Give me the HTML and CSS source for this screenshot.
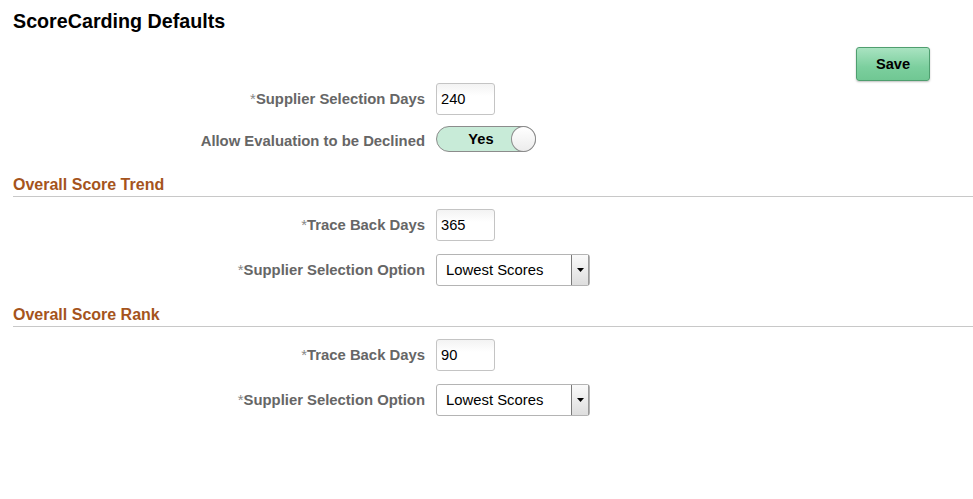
FILE: index.html
```html
<!DOCTYPE html>
<html>
<head>
<meta charset="utf-8">
<link rel="stylesheet" href="styles.css">
</head>
<body>
<div class="page">
  <h1 class="title">ScoreCarding Defaults</h1>
  <div class="toolbar">
    <button class="save-btn" type="button">Save</button>
  </div>

  <div class="form-row row-first">
    <label class="label"><span class="req">*</span>Supplier Selection Days</label>
    <input class="text-input" type="text" value="240">
  </div>
  <div class="form-row row-toggle">
    <label class="label label-toggle">Allow Evaluation to be Declined</label>
    <div class="toggle">
      <span class="toggle-text">Yes</span>
      <span class="toggle-knob"></span>
    </div>
  </div>

  <h2 class="section-head section-first">Overall Score Trend</h2>
  <div class="form-row row-after-head">
    <label class="label"><span class="req">*</span>Trace Back Days</label>
    <input class="text-input" type="text" value="365">
  </div>
  <div class="form-row row-select">
    <label class="label"><span class="req">*</span>Supplier Selection Option</label>
    <div class="select">
      <span class="select-text">Lowest Scores</span>
      <span class="select-btn"><svg width="7" height="4" viewBox="0 0 7 4"><path d="M0 0H7L3.5 4Z" fill="#000"/></svg></span>
    </div>
  </div>

  <h2 class="section-head section-second">Overall Score Rank</h2>
  <div class="form-row row-after-head">
    <label class="label"><span class="req">*</span>Trace Back Days</label>
    <input class="text-input" type="text" value="90">
  </div>
  <div class="form-row row-select">
    <label class="label"><span class="req">*</span>Supplier Selection Option</label>
    <div class="select">
      <span class="select-text">Lowest Scores</span>
      <span class="select-btn"><svg width="7" height="4" viewBox="0 0 7 4"><path d="M0 0H7L3.5 4Z" fill="#000"/></svg></span>
    </div>
  </div>
</div>
</body>
</html>
```

FILE: styles.css
```css
* { box-sizing: border-box; }
html, body { margin: 0; padding: 0; background: #fff; }
body {
  font-family: "Liberation Sans", Arial, sans-serif;
  font-size: 14.67px;
  color: #000;
}
.page {
  padding: 10px 0 0 13px;
  width: 973px;
}
.title {
  margin: 0;
  font-size: 19.7px;
  line-height: 23px;
  font-weight: bold;
  color: #000;
}
.toolbar {
  display: flex;
  justify-content: flex-end;
  padding: 14px 43px 0 0;
}
.save-btn {
  width: 74px;
  height: 34px;
  margin: 0;
  padding: 0;
  border: 1px solid #4f9e6f;
  border-radius: 3px;
  background: linear-gradient(#a9e3c1, #7ccf9e 60%, #70c793);
  box-shadow: 0 1px 2px rgba(0,0,0,0.25);
  font-family: "Liberation Sans", Arial, sans-serif;
  font-size: 14.67px;
  font-weight: bold;
  color: #000;
}
.form-row {
  display: flex;
  align-items: center;
  gap: 11px;
}
.row-first { margin-top: 2px; height: 32px; }
.row-toggle { margin-top: 11px; height: 26px; }
.row-after-head { margin-top: 12px; height: 32px; }
.row-select { margin-top: 13px; height: 32px; }
.label {
  width: 412px;
  text-align: right;
  font-size: 14.85px;
  font-weight: bold;
  color: #666;
  white-space: nowrap;
}
.label-toggle { padding-top: 3px; }
.req {
  font-weight: normal;
  color: #888;
}
.text-input {
  width: 59px;
  height: 32px;
  margin: 0;
  padding: 0 0 0 4px;
  border: 1px solid #c4c4c4;
  border-radius: 3px;
  background: linear-gradient(#f3f3f3, #fff 40%);
  font-family: "Liberation Sans", Arial, sans-serif;
  font-size: 14.67px;
  color: #000;
  outline: none;
}
.toggle {
  display: flex;
  align-items: center;
  width: 100px;
  height: 26px;
  border: 1px solid #8c8c8c;
  border-radius: 13px;
  background: #c8ebd8;
}
.toggle-text {
  flex: 1;
  text-align: center;
  padding-left: 14px;
  font-weight: bold;
  color: #000;
}
.toggle-knob {
  width: 25px;
  height: 26px;
  margin: -1px -1px -1px 0;
  border: 1px solid #8c8c8c;
  border-radius: 50%;
  background: linear-gradient(#fff, #ececec);
}
.section-head {
  margin: 0;
  padding-bottom: 2px;
  height: 22px;
  font-size: 16px;
  line-height: 19px;
  font-weight: bold;
  color: #a5541c;
  border-bottom: 1px solid #c8c8c8;
}
.section-first { margin-top: 23px; }
.section-second { margin-top: 19px; }
.select {
  display: flex;
  align-items: stretch;
  width: 154px;
  height: 32px;
  border: 1px solid #b4b4b4;
  border-radius: 3px;
  background: #fff;
}
.select-text {
  flex: 1;
  display: flex;
  align-items: center;
  padding-left: 9px;
  font-size: 14.85px;
  color: #000;
}
.select-btn {
  width: 18px;
  display: flex;
  align-items: center;
  justify-content: center;
  border-left: 1px solid #7a7a7a;
  border-right: 1px solid #9a9a9a;
  background: linear-gradient(#fafafa, #dedede);
}
```
